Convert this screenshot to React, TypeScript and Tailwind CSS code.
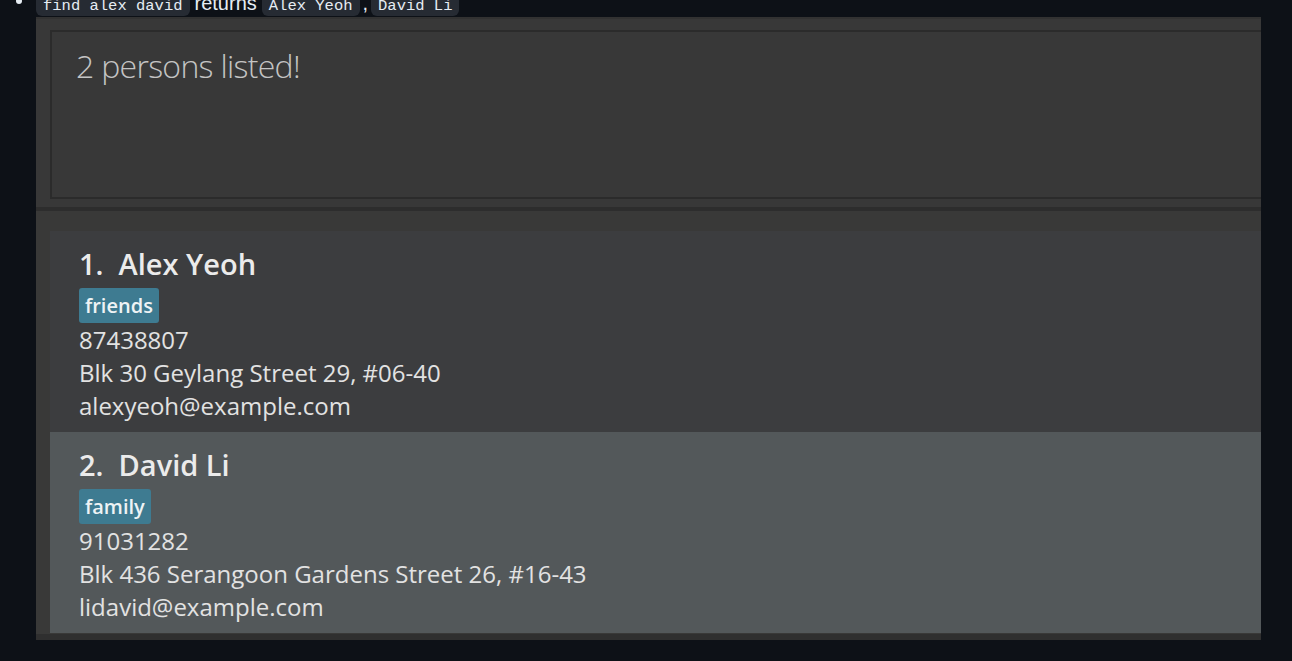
import React from 'react';

type Person = {
  name: string;
  tag: string;
  phone: string;
  address: string;
  email: string;
};

const PEOPLE: Person[] = [
  { name: 'Alex Yeoh', tag: 'friends', phone: '87438807', address: 'Blk 30 Geylang Street 29, #06-40', email: 'alexyeoh@example.com' },
  { name: 'David Li', tag: 'family', phone: '91031282', address: 'Blk 436 Serangoon Gardens Street 26, #16-43', email: 'lidavid@example.com' },
];

const Code: React.FC<{ children: React.ReactNode }> = ({ children }) => (
  <span className="inline-block bg-[#262b33] rounded-[6px] px-[7px] pt-[10px] pb-[1px] font-['Liberation_Mono',monospace] text-[15.5px] leading-[17px] text-[#e6edf3]">
    {children}
  </span>
);

const PersonCard: React.FC<{ person: Person; index: number }> = ({ person, index }) => (
  <div className={`flex flex-col pl-[29px] pt-[13px] h-[201px] ${index % 2 === 0 ? 'bg-[#3c3d3f]' : 'bg-[#53585a]'}`}>
    <div className="h-[40px] flex items-center font-semibold text-[29px] text-[#ebebeb] whitespace-pre">
      {`${index + 1}.  ${person.name}`}
    </div>
    <div className="mt-[4px] flex">
      <span className="h-[35px] flex items-center px-[6px] rounded-[3px] bg-[#3e7b91] text-[#eef3f5] font-semibold text-[20px]">
        {person.tag}
      </span>
    </div>
    <div className="text-[24px] leading-[33px] text-[#e2e2e2]">
      <div>{person.phone}</div>
      <div>{person.address}</div>
      <div>{person.email}</div>
    </div>
  </div>
);

export default function App() {
  return (
    <div className="w-full h-[661px] overflow-hidden bg-[#0d1117] font-['Open_Sans',sans-serif]">
      {/* markdown line above the screenshot */}
      <div className="h-[17px] overflow-hidden">
        <div className="-mt-[12px] flex items-baseline gap-[5px] whitespace-pre text-[#e6edf3] font-['Liberation_Sans',sans-serif] text-[20px] leading-[20px]">
          <span className="self-start mt-[10px] ml-[16px] mr-[9px] w-[6px] h-[6px] rounded-full bg-[#e6edf3]" />
          <Code>find alex david</Code>
          <span>returns</span>
          <Code>Alex Yeoh</Code>
          <span className="-mx-[2px]">,</span>
          <Code>David Li</Code>
        </div>
      </div>

      {/* app screenshot */}
      <div className="ml-[36px] w-[1225px] h-[623px] bg-[#383838] border-t-[2px] border-[#323232] flex flex-col">
        <div className="pl-[14px] pt-[11px]">
          <div className="h-[169px] border-y-[2px] border-l-[2px] border-[#2b2b2b] pl-[24px] pt-[11px]">
            <div className="font-light text-[32px] tracking-[-0.7px] text-[#c4c4c4] leading-[46px]">2 persons listed!</div>
          </div>
        </div>
        <div className="mt-[8px] h-[4px] bg-[#2d2d2d]" />
        <div className="flex-1 pl-[14px] pt-[20px] bg-[#393938] flex flex-col">
          {PEOPLE.map((p, i) => (
            <PersonCard key={p.name} person={p} index={i} />
          ))}
        </div>
        <div className="h-[6px] bg-[#2f2f2f]" />
      </div>
    </div>
  );
}
